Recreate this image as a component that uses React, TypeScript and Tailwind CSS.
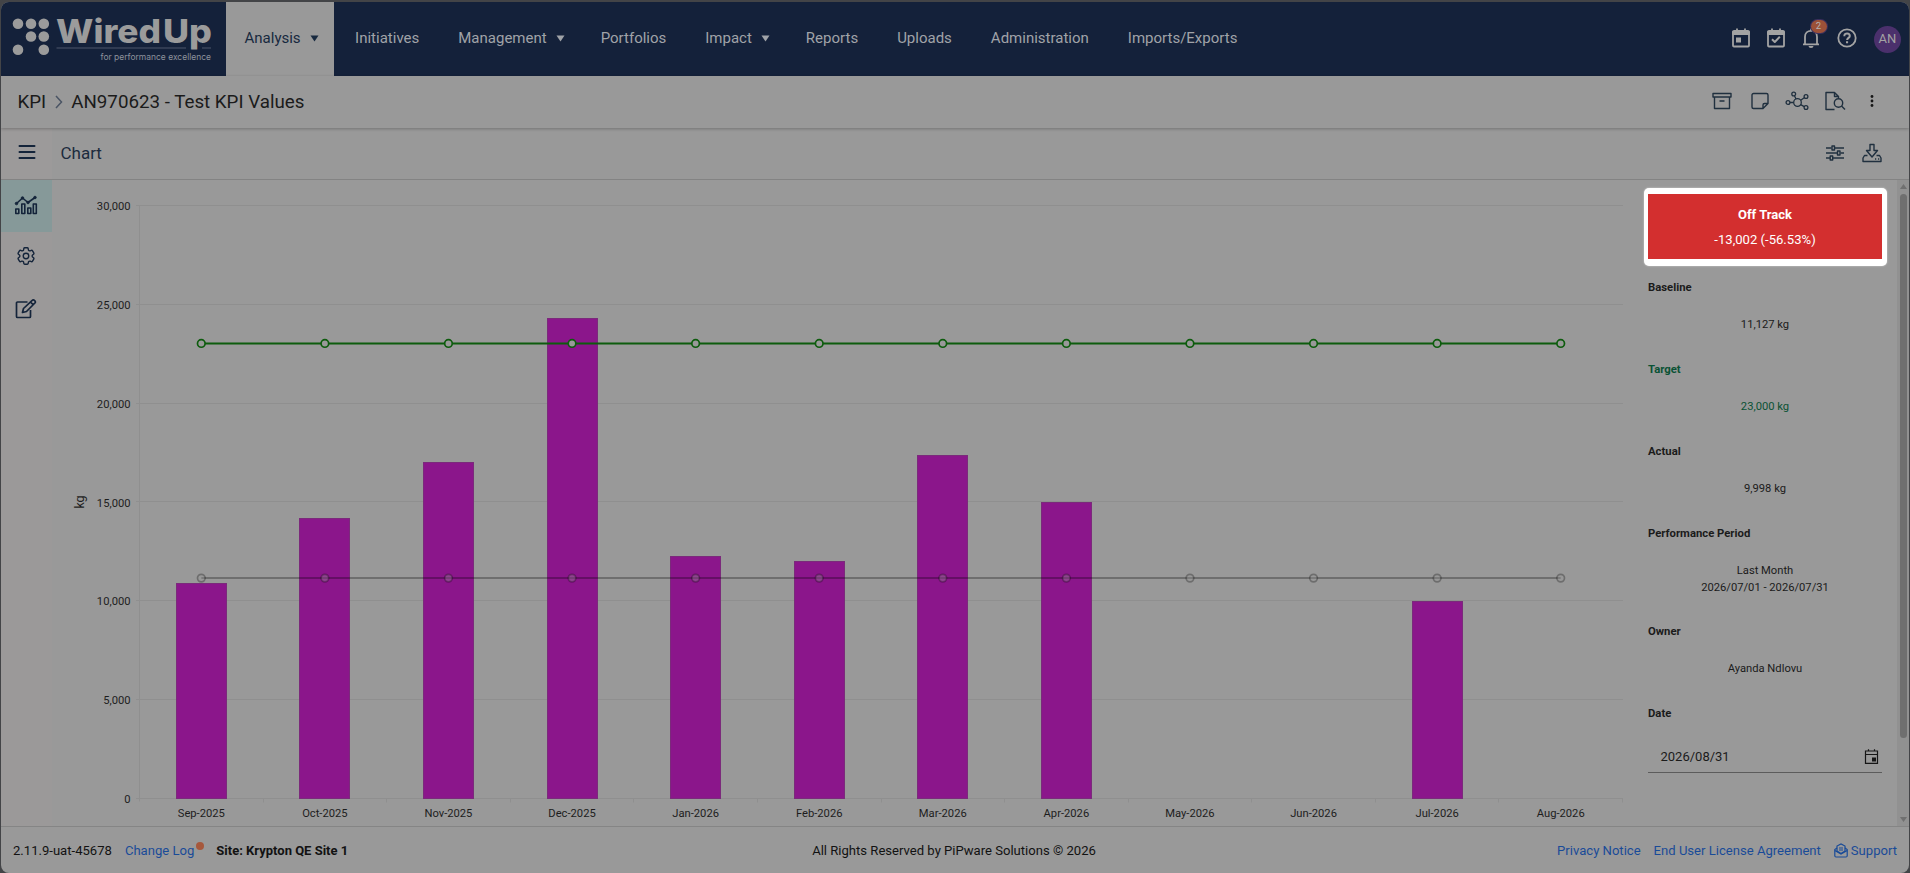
import type { ReactNode } from "react";
import { HiOutlineCog6Tooth } from "react-icons/hi2";

const navItems = [
  { label: "Analysis", menu: true, active: true },
  { label: "Initiatives" },
  { label: "Management", menu: true },
  { label: "Portfolios" },
  { label: "Impact", menu: true },
  { label: "Reports" },
  { label: "Uploads" },
  { label: "Administration" },
  { label: "Imports/Exports" },
];

const data = [
  { month: "Sep-2025", value: 10900 },
  { month: "Oct-2025", value: 14210 },
  { month: "Nov-2025", value: 17020 },
  { month: "Dec-2025", value: 24310 },
  { month: "Jan-2026", value: 12270 },
  { month: "Feb-2026", value: 12010 },
  { month: "Mar-2026", value: 17380 },
  { month: "Apr-2026", value: 15020 },
  { month: "May-2026", value: null },
  { month: "Jun-2026", value: null },
  { month: "Jul-2026", value: 9998 },
  { month: "Aug-2026", value: null },
];

const Logo = () => (
  <svg width="214" height="60" viewBox="0 0 214 60" fill="#9b9b9b">
    {[
      [17, 20.8],
      [30, 20.8],
      [42.8, 20.8],
      [30, 33.5],
      [42.8, 33.5],
      [17, 46.7],
      [42.8, 46.7],
    ].map(([cx, cy]) => (
      <circle key={`${cx}-${cy}`} cx={cx} cy={cy} r="5.3" />
    ))}
    <g fontFamily="Inter, sans-serif" fontWeight="800" fontSize="33">
      <text x="55" y="40" textLength="105" lengthAdjust="spacingAndGlyphs">
        Wired
      </text>
      <text x="162" y="40" textLength="49" lengthAdjust="spacingAndGlyphs">
        Up
      </text>
    </g>
    <path d="M55.5 45H185M201 45h9" stroke="#4c566b" strokeWidth="1.2" />
    <text
      x="99.5"
      y="57"
      fontFamily="Inter, sans-serif"
      fontSize="8.6"
      fill="#8d929c"
      textLength="110.5"
      lengthAdjust="spacingAndGlyphs"
    >
      for performance excellence
    </text>
  </svg>
);

const Icon = ({
  children,
  width = 1.4,
}: {
  children: ReactNode;
  width?: number;
}) => (
  <svg
    width="24"
    height="24"
    viewBox="0 0 24 24"
    fill="none"
    stroke="currentColor"
    strokeWidth={width}
    strokeLinejoin="round"
    className="shrink-0"
  >
    {children}
  </svg>
);

const HeaderIcons = () => (
  <div className="ml-auto flex items-center pr-[8px] pb-[3px] text-[#a3a3a3]">
    <Icon width={1.8}>
      <rect x="4" y="5" width="16" height="15.5" rx="1" />
      <path d="M4 6h16v2H4zM8 2.5v3M16 2.5v3" />
      <path d="M7 11.5h5v5H7z" fill="currentColor" stroke="none" />
    </Icon>
    <div className="w-[11px]" />
    <Icon width={1.8}>
      <rect x="4" y="5" width="16" height="15.5" rx="1" />
      <path d="M4 6h16v2H4zM8 2.5v3M16 2.5v3" />
      <path d="m8 13.3 2.8 2.7 5-5.2" strokeWidth="2" />
    </Icon>
    <div className="relative ml-[11px]">
      <Icon width={1.8}>
        <path d="M4 18.3h16M6 18v-7.2C6 7 8.6 4.8 12 4.8s6 2.2 6 6V18" />
        <path d="M12 2.5v2.5" />
        <path d="M9.5 20h5a2.5 2 0 0 1-5 0z" fill="currentColor" stroke="none" />
      </Icon>
      <span className="absolute -top-[6px] left-[12px] flex h-[13px] w-[16px] items-center justify-center rounded-full bg-[#9c5138] text-[9.5px] leading-none text-[#b5b5b5] ring-1 ring-[#3a2f5c]">
        2
      </span>
    </div>
    <div className="w-[12px]" />
    <Icon width={1.8}>
      <circle cx="12" cy="12" r="8.7" />
      <path d="M9.3 10.2c0-3.8 5.5-3.4 5.5-.3 0 2-2.7 2-2.7 4.1" strokeWidth="2" />
      <path d="M11 15.3h2.1v2H11z" fill="currentColor" stroke="none" />
    </Icon>
    <div className="relative top-[1.5px] ml-[15.5px] flex size-[27px] items-center justify-center rounded-full bg-[#4b306c] text-[13px] text-[#a3a3a3]">
      AN
    </div>
  </div>
);

const Header = () => (
  <header className="flex h-[74px] shrink-0 bg-[#14213a]">
    <div className="w-[225px] pt-[1px]">
      <Logo />
    </div>
    <nav className="flex text-[15px]">
      {navItems.map(({ label, menu, active }) => (
        <div
          key={label}
          className={`flex items-center pb-[2px] ${
            active
              ? "mr-[2px] bg-[#999] pr-[15px] pl-[18.5px] text-[#17293f]"
              : menu
                ? "pr-[16.5px] pl-[19.5px] text-[#a0a3a8]"
                : "px-[19.5px] text-[#a0a3a8]"
          }`}
        >
          {label}
          {menu && (
            <svg width="9" height="7" viewBox="0 0 9 7" className="ml-[9px]">
              <path d="M.5.5h8l-4 6z" fill="currentColor" />
            </svg>
          )}
        </div>
      ))}
    </nav>
    <HeaderIcons />
  </header>
);

const TitleBar = () => (
  <div className="z-10 flex h-[52px] shrink-0 items-center pr-[25px] pl-[16.5px] text-[18.75px] text-[#1b1b1b] shadow-[0_1px_3px_rgba(0,0,0,0.25)]">
    KPI
    <svg width="8" height="14" viewBox="0 0 8 14" className="mx-[8.5px]">
      <path d="m1 1 5.5 6L1 13" fill="none" stroke="#4a5464" strokeWidth="1.5" />
    </svg>
    AN970623 - Test KPI Values
    <div className="ml-auto flex gap-[13.5px] pb-[3px] text-[#20303f]">
      <Icon>
        <path d="M3 4.500h18v3.500H3zM4.500 8v11.500h15V8M9.500 12h5" />
      </Icon>
      <Icon>
        <path d="M5.500 4.500h13a1.500 1.500 0 0 1 1.500 1.500v8.500l-5 5H5.500A1.500 1.500 0 0 1 4 18V6a1.500 1.500 0 0 1 1.500-1.500zM15 19.500V16a1.500 1.500 0 0 1 1.500-1.500H20" />
      </Icon>
      <Icon width={1.3}>
        <circle cx="12.5" cy="13.5" r="3.8" />
        <circle cx="8.7" cy="5" r="1.9" />
        <circle cx="21" cy="7.5" r="1.9" />
        <circle cx="21" cy="18.5" r="1.9" />
        <circle cx="3" cy="13.5" r="1.9" />
        <path d="M9.500 6.700l1.500 3.300M19.200 8.700l-3.500 2.600M19.200 17.600l-3.500-2M5 13.500h3.500" />
      </Icon>
      <Icon>
        <path d="M11.500 20.500H3v-17h8.500l4 4V9M11.500 3.500v4h4" />
        <circle cx="15.5" cy="14" r="4.2" />
        <path d="m18.5 17 3.5 3.5" />
      </Icon>
      <Icon>
        <g fill="#161616" stroke="none">
          <circle cx="12" cy="7.5" r="1.4" />
          <circle cx="12" cy="12" r="1.4" />
          <circle cx="12" cy="16.5" r="1.4" />
        </g>
      </Icon>
    </div>
  </div>
);

const ChartBar = () => (
  <div className="flex h-[52px] shrink-0 items-center border-b border-[#838383] pr-[25px] text-[17px] text-[#1c2b3d]">
    <div className="flex h-full w-[51px] items-center justify-center bg-[#9c9a9a] pb-[3px]">
      <svg width="18" height="16" viewBox="0 0 18 16" className="text-[#14243a]">
        <path
          d="M1.5 2h15M1.5 8h15M1.5 14h15"
          stroke="currentColor"
          strokeWidth="2"
          strokeLinecap="round"
        />
      </svg>
    </div>
    <span className="pl-[8.5px]">Chart</span>
    <div className="ml-auto flex gap-[13.5px] pb-[2px] text-[#20303f]">
      <Icon>
        <path d="M3 7h5.500M11.500 7H21M3 12h11.500M17.500 12H21M3 17h4M10 17h11" />
        <path d="M9 5h2.500v4H9zM14.500 10H17v4h-2.500zM7.200 15h2.500v4H7.200z" />
      </Icon>
      <Icon>
        <path d="M10 3.500h4v6h3.500L12 16l-5.500-6.500H10zM7.500 14.500H4.500L3 17v3.500h18V17l-1.500-2.500h-3M15 18h1.200M18 18h1.200" />
      </Icon>
    </div>
  </div>
);

const Sidebar = () => (
  <aside className="w-[51px] shrink-0 bg-[#9b9999] text-[#14243a]">
    <div className="flex h-[52px] items-center justify-center bg-[#869999] pr-[1px] pb-[4px]">
      <Icon width={1.6}>
        <path d="M1.8 21.500v-4.500h3v4.500zM7.800 21.500V12h3v9.500zM13.800 21.500V16h3v5.500zM19.300 21.500V12h3v9.500z" />
        <path d="m2.500 11.500 6-5.500 5.500 4.500L21 5.500" />
        <g fill="currentColor" strokeWidth="0.8">
          <circle cx="2.5" cy="11.5" r="1.3" />
          <circle cx="8.500" cy="6" r="1.3" />
          <circle cx="14" cy="10.5" r="1.3" />
          <circle cx="21" cy="5.5" r="1.3" />
        </g>
      </Icon>
    </div>
    <div className="flex h-[52px] items-center justify-center pr-[1px] pb-[4px]">
      <HiOutlineCog6Tooth size={22} />
    </div>
    <div className="flex h-[52px] items-center justify-center pr-[1px] pb-[3px]">
      <Icon width={1.7}>
        <path d="M13.500 5H3.500a1 1 0 0 0-1 1v13.500a1 1 0 0 0 1 1h12a1 1 0 0 0 1-1V13" />
        <path d="m8.500 15.500 1-4 8.700-8.200a1.500 1.500 0 0 1 2.200 0l.5.5a1.500 1.500 0 0 1 0 2.200l-8.400 8.500zM16.500 5l2.800 2.800" />
      </Icon>
    </div>
  </aside>
);

const LEFT = 87.5;
const RIGHT = 1570.5;
const STEP = (RIGHT - LEFT) / 12;
const y = (v: number) => 618.5 - (v / 1000) * 19.767;
const cx = (i: number) => LEFT + STEP * (i + 0.5);

const Series = ({
  value,
  color,
  fill,
  opacity,
}: {
  value: number;
  color: string;
  fill: string;
  opacity: number;
}) => (
  <g>
    <path
      d={`M${cx(0)} ${y(value)}H${cx(11)}`}
      stroke={color}
      strokeOpacity={opacity}
      strokeWidth="2"
    />
    {data.map(({ month }, i) => (
      <circle
        key={month}
        cx={cx(i)}
        cy={y(value)}
        r="3.8"
        fill={fill}
        stroke={color}
        strokeOpacity={opacity}
        strokeWidth="1.7"
      />
    ))}
  </g>
);

const Chart = () => (
  <svg
    width="1578"
    height="646"
    viewBox="0 0 1578 646"
    className="shrink-0 font-['Roboto',sans-serif]"
  >
    <g stroke="#8f8f8f">
      {[0, 5, 10, 15, 20, 25, 30].map((k) => (
        <path key={k} d={`M84 ${Math.floor(y(k * 1000)) + 0.5}H${RIGHT + 0.5}`} />
      ))}
      <path d={`M${LEFT} 25.5V621.5`} />
      {data.map(({ month }, i) => {
        const x = Math.floor(LEFT + STEP * (i + 1)) + 0.5;
        return <path key={month} d={`M${x} 618.5v4`} />;
      })}
    </g>
    <g fill="#1d1d1d" fontSize="11.2">
      {[0, 5, 10, 15, 20, 25, 30].map((k) => (
        <text key={k} x="78.5" y={y(k * 1000) + 4.6} textAnchor="end">
          {(k * 1000).toLocaleString("en-US")}
        </text>
      ))}
      {data.map(({ month }, i) => (
        <text key={month} x={cx(i)} y="637.3" textAnchor="middle">
          {month}
        </text>
      ))}
    </g>
    <text
      transform="translate(32 322) rotate(-90)"
      textAnchor="middle"
      fontSize="12.5"
      fill="#1d1d1d"
    >
      kg
    </text>
    {data.map(
      ({ month, value }, i) =>
        value !== null && (
          <rect
            key={month}
            x={Math.floor(cx(i) - 25) + 0.5}
            y={Math.round(y(value)) + 0.5}
            width="50"
            height={618 - Math.round(y(value))}
            fill="#8b168b"
            stroke="#7b2a7b"
          />
        )
    )}
    <Series value={11150} color="#000" fill="rgb(153 153 153 / 0.35)" opacity={0.28} />
    <Series value={23020} color="#0d5c0d" fill="#999" opacity={1} />
  </svg>
);

const Field = ({
  label,
  children,
  className = "h-[81.8px] text-[#1b1b1b]",
}: {
  label: string;
  children: ReactNode;
  className?: string;
}) => (
  <div className={`shrink-0 ${className}`}>
    <div className="text-[11.3px] leading-[16px] font-bold">{label}</div>
    <div className="pt-[20px] text-center text-[11.2px] leading-[17px]">
      {children}
    </div>
  </div>
);

const Summary = () => (
  <section className="ml-[13.5px] flex w-[243px] shrink-0 flex-col pt-[7.5px]">
    <div className="h-[78px] shrink-0 rounded-[5px] bg-white px-[4.5px] py-[6.5px] shadow-[0_0_2px_rgba(255,255,255,0.6)]">
      <div className="flex h-full flex-col items-center justify-center bg-[#d32f2f] text-[13px] leading-[25px] text-white">
        <b>Off Track</b>
        <span className="text-[13.1px]">-13,002 (-56.53%)</span>
      </div>
    </div>
    <div className="flex flex-col px-[4.5px] pt-[14.9px]">
      <Field label="Baseline">11,127 kg</Field>
      <Field label="Target" className="h-[81.8px] text-[#0a5234]">
        23,000 kg
      </Field>
      <Field label="Actual">9,998 kg</Field>
      <Field label="Performance Period" className="h-[98.3px] text-[#1b1b1b]">
        Last Month
        <br />
        2026/07/01 - 2026/07/31
      </Field>
      <Field label="Owner">Ayanda Ndlovu</Field>
      <div className="text-[11.3px] leading-[16px] font-bold text-[#1b1b1b]">
        Date
      </div>
      <div className="mt-[18.5px] flex h-[33px] items-center border-b border-[#5c5c5c] pt-[1px] pr-[2px] pl-[12.5px] text-[13px] text-[#1b1b1b]">
        2026/08/31
        <svg
          width="17"
          height="17"
          viewBox="0 0 17 17"
          className="ml-auto"
          fill="none"
          stroke="#161616"
          strokeWidth="1.2"
        >
          <path d="M2.500 3h12v12.400h-12zM2.500 6.500h12M5.500 1.200V3M11.500 1.200V3" />
          <path d="M9 9.500h4v4H9z" fill="#161616" stroke="none" />
        </svg>
      </div>
    </div>
  </section>
);

const Scrollbar = () => (
  <div className="ml-auto flex w-[12px] shrink-0 flex-col items-center bg-[#919191] py-[4px]">
    <svg width="7" height="5" viewBox="0 0 7 5">
      <path d="M3.5 0 7 5H0z" fill="#707070" />
    </svg>
    <div className="mt-[5px] h-[544px] w-[7px] rounded-full bg-[#6f6f6f]" />
    <svg width="7" height="5" viewBox="0 0 7 5" className="mt-auto">
      <path d="M0 0h7L3.5 5z" fill="#707070" />
    </svg>
  </div>
);

const Footer = () => (
  <footer className="flex flex-1 items-center border-t border-[#858585] pt-[1px] pr-[12px] pl-[12px] text-[13.08px] text-[#121212]">
    <div className="flex flex-1 items-center">
      2.11.9-uat-45678
      <span className="ml-[13px] text-[#194b98]">Change Log</span>
      <span className="mt-[-9px] ml-[2px] size-[8px] rounded-full bg-[#a6583c]" />
      <b className="ml-[12px] text-[13px]">Site: Krypton QE Site 1</b>
    </div>
    <div className="mr-[2px]">All Rights Reserved by PiPware Solutions © 2026</div>
    <div className="flex flex-1 items-center justify-end text-[#194b98]">
      <span>Privacy Notice</span>
      <span className="ml-[13px]">End User License Agreement</span>
      <svg
        width="14"
        height="15"
        viewBox="0 0 14 15"
        fill="none"
        stroke="currentColor"
        strokeWidth="1.2"
        className="mr-[3px] ml-[13px]"
      >
        <path d="M3 5 .8 6.500v6.300a1.200 1.200 0 0 0 1.200 1.200h10a1.200 1.200 0 0 0 1.200-1.200V6.500L11 5" />
        <path d="M3 8V3l4-2 4 2v5L7 10.500zM.8 7.500 7 11l6.200-3.500M5 5h4M5 7h4" />
      </svg>
      Support
    </div>
  </footer>
);

export default function App() {
  return (
    <div className="h-[873px] w-[1910px] overflow-hidden bg-[#434447] px-[1px] pt-[2px] font-['Roboto',sans-serif]">
      <div className="flex h-full flex-col overflow-hidden rounded-[8px] bg-[#999]">
        <Header />
        <TitleBar />
        <ChartBar />
        <main className="flex h-[646px] shrink-0">
          <Sidebar />
          <Chart />
          <Summary />
          <Scrollbar />
        </main>
        <Footer />
      </div>
    </div>
  );
}
